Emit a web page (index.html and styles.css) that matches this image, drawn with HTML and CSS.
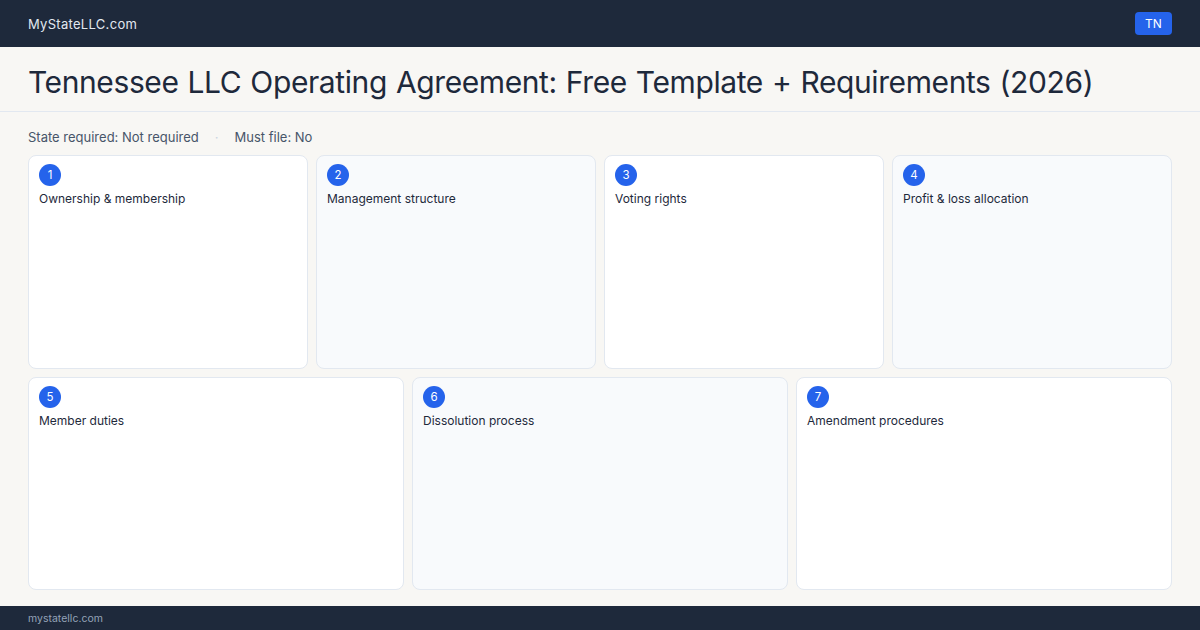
FILE: index.html
```html
<!DOCTYPE html>
<html lang="en">
<head>
<meta charset="utf-8">
<title>Tennessee LLC Operating Agreement</title>
<link rel="stylesheet" href="styles.css">
</head>
<body>
<header class="topbar">
  <span class="brand">MyStateLLC.com</span>
  <span class="state-badge">TN</span>
</header>
<section class="title-band">
  <h1 class="title">Tennessee LLC Operating Agreement: Free Template + Requirements (2026)</h1>
</section>
<main class="main">
  <div class="meta">
    <span>State required: Not required</span>
    <span class="sep">·</span>
    <span>Must file: No</span>
  </div>
  <div class="row row-4">
    <div class="card"><span class="num">1</span><span class="label">Ownership &amp; membership</span></div>
    <div class="card alt"><span class="num">2</span><span class="label">Management structure</span></div>
    <div class="card"><span class="num">3</span><span class="label">Voting rights</span></div>
    <div class="card alt"><span class="num">4</span><span class="label">Profit &amp; loss allocation</span></div>
  </div>
  <div class="row row-3">
    <div class="card"><span class="num">5</span><span class="label">Member duties</span></div>
    <div class="card alt"><span class="num">6</span><span class="label">Dissolution process</span></div>
    <div class="card"><span class="num">7</span><span class="label">Amendment procedures</span></div>
  </div>
</main>
<footer class="footer">mystatellc.com</footer>
</body>
</html>
```

FILE: styles.css
```css
* { box-sizing: border-box; margin: 0; padding: 0; }
html, body { width: 1200px; height: 630px; }
body {
  font-family: Inter, "Noto Sans", sans-serif;
  background: #f8f7f4;
  color: #1e293b;
  display: flex;
  flex-direction: column;
  overflow: hidden;
}
.topbar {
  height: 47px;
  flex: none;
  background: #1e293b;
  display: flex;
  align-items: center;
  justify-content: space-between;
  padding: 0 28px;
}
.brand {
  color: #e2e8f0;
  font-size: 13px;
  letter-spacing: 0.3px;
}
.state-badge {
  background: #2563eb;
  color: #ffffff;
  font-size: 12px;
  border-radius: 4px;
  height: 23px;
  width: 37px;
  display: flex;
  align-items: center;
  justify-content: center;
}
.title-band {
  height: 65px;
  flex: none;
  border-bottom: 1px solid #e2e8f0;
  display: flex;
  align-items: center;
  padding: 5px 28px 0;
}
.title {
  font-size: 30px;
  font-weight: 400;
  color: #1e293b;
  line-height: 1;
  letter-spacing: -0.4px;
  word-spacing: 1px;
  white-space: nowrap;
}
.main {
  flex: 1;
  display: flex;
  flex-direction: column;
  gap: 8px;
  padding: 16px 28px 16px;
}
.meta {
  font-size: 13px;
  color: #475569;
  display: flex;
  gap: 16px;
  height: 18px;
  align-items: center;
  margin-bottom: 1px;
}
.meta .sep { color: #cbd5e1; }
.row {
  flex: 1;
  display: grid;
  gap: 8px;
}
.row-4 { grid-template-columns: repeat(4, 1fr); }
.row-3 { grid-template-columns: repeat(3, 1fr); }
.card {
  background: #ffffff;
  border: 1px solid #e2e8f0;
  border-radius: 8px;
  padding: 8px 10px;
  display: flex;
  flex-direction: column;
  align-items: flex-start;
  gap: 5px;
}
.card.alt { background: #f8fafc; }
.num {
  width: 22px;
  height: 22px;
  border-radius: 50%;
  background: #2563eb;
  color: #ffffff;
  font-size: 11.5px;
  display: flex;
  align-items: center;
  justify-content: center;
}
.label {
  font-size: 12px;
  color: #1e293b;
  line-height: 16px;
}
.footer {
  height: 24px;
  flex: none;
  background: #1e293b;
  color: #94a3b8;
  font-size: 10.5px;
  padding: 0 28px;
  display: flex;
  align-items: center;
}
```
